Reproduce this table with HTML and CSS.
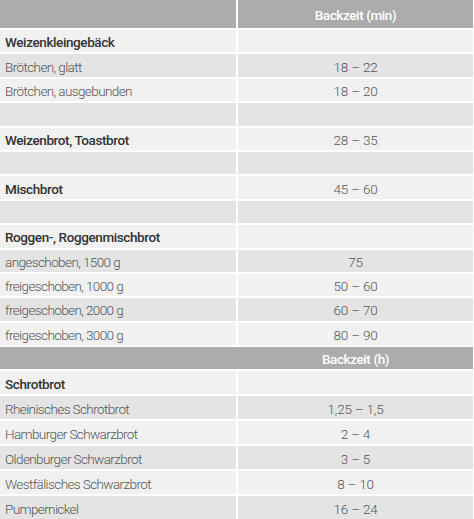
FILE: index.html
```html
<!DOCTYPE html>
<html lang="de">
<head>
<meta charset="utf-8">
<title>Backzeiten</title>
<link rel="stylesheet" href="styles.css">
</head>
<body>
<div class="table">
  <div class="row head head1"><div class="cell"></div><div class="cell val">Backzeit (min)</div></div>
  <div class="row s1 light"><div class="cell b">Weizenkleingebäck</div><div class="cell val"></div></div>
  <div class="row s1 dark"><div class="cell">Brötchen, glatt</div><div class="cell val">18 – 22</div></div>
  <div class="row s1 light"><div class="cell">Brötchen, ausgebunden</div><div class="cell val">18 – 20</div></div>
  <div class="row s1 dark"><div class="cell"></div><div class="cell val"></div></div>
  <div class="row s1 light"><div class="cell b">Weizenbrot, Toastbrot</div><div class="cell val">28 – 35</div></div>
  <div class="row s1 dark"><div class="cell"></div><div class="cell val"></div></div>
  <div class="row s1 light"><div class="cell b">Mischbrot</div><div class="cell val">45 – 60</div></div>
  <div class="row s1 dark"><div class="cell"></div><div class="cell val"></div></div>
  <div class="row s1 light"><div class="cell b">Roggen-, Roggenmischbrot</div><div class="cell val"></div></div>
  <div class="row s1 dark"><div class="cell">angeschoben, 1500 g</div><div class="cell val">75</div></div>
  <div class="row s1 light"><div class="cell">freigeschoben, 1000 g</div><div class="cell val">50 – 60</div></div>
  <div class="row s1 dark"><div class="cell">freigeschoben, 2000 g</div><div class="cell val">60 – 70</div></div>
  <div class="row s1 light"><div class="cell">freigeschoben, 3000 g</div><div class="cell val">80 – 90</div></div>
  <div class="row head head2"><div class="cell"></div><div class="cell val">Backzeit (h)</div></div>
  <div class="row s2 light"><div class="cell b">Schrotbrot</div><div class="cell val"></div></div>
  <div class="row s2 dark"><div class="cell">Rheinisches Schrotbrot</div><div class="cell val">1,25 – 1,5</div></div>
  <div class="row s2 light"><div class="cell">Hamburger Schwarzbrot</div><div class="cell val">2 – 4</div></div>
  <div class="row s2 dark"><div class="cell">Oldenburger Schwarzbrot</div><div class="cell val">3 – 5</div></div>
  <div class="row s2 light"><div class="cell">Westfälisches Schwarzbrot</div><div class="cell val">8 – 10</div></div>
  <div class="row s2 dark"><div class="cell">Pumpernickel</div><div class="cell val">16 – 24</div></div>
</div>
</body>
</html>
```
FILE: styles.css
```css
html, body {
  margin: 0;
  padding: 0;
  background: #ffffff;
}
body {
  font-family: Roboto, "Liberation Sans", Arial, sans-serif;
  font-size: 13.5px;
  font-weight: 300;
  letter-spacing: -0.6px;
  color: #555555;
  overflow: hidden;
}
.table {
  display: flex;
  flex-direction: column;
  gap: 2px;
  width: 473px;
}
.row {
  display: grid;
  grid-template-columns: 236px 1fr;
  column-gap: 2px;
}
.cell {
  display: flex;
  align-items: center;
  padding-left: 5px;
  padding-top: 2px;
}
.cell.val {
  justify-content: center;
  padding-left: 0;
  letter-spacing: -0.2px;
}
.cell.b {
  font-weight: 500;
  letter-spacing: -0.4px;
  color: #333333;
}
.s1 { height: 22.4px; }
.s2 { height: 23px; }
.light .cell { background: #f1f1f1; }
.dark .cell { background: #e4e4e4; }
.head .cell {
  background: #acacac;
  color: #ffffff;
  font-weight: 500;
  letter-spacing: -0.4px;
}
.head1 { height: 28px; }
.head2 {
  height: 22px;
  background: #acacac;
}
```
